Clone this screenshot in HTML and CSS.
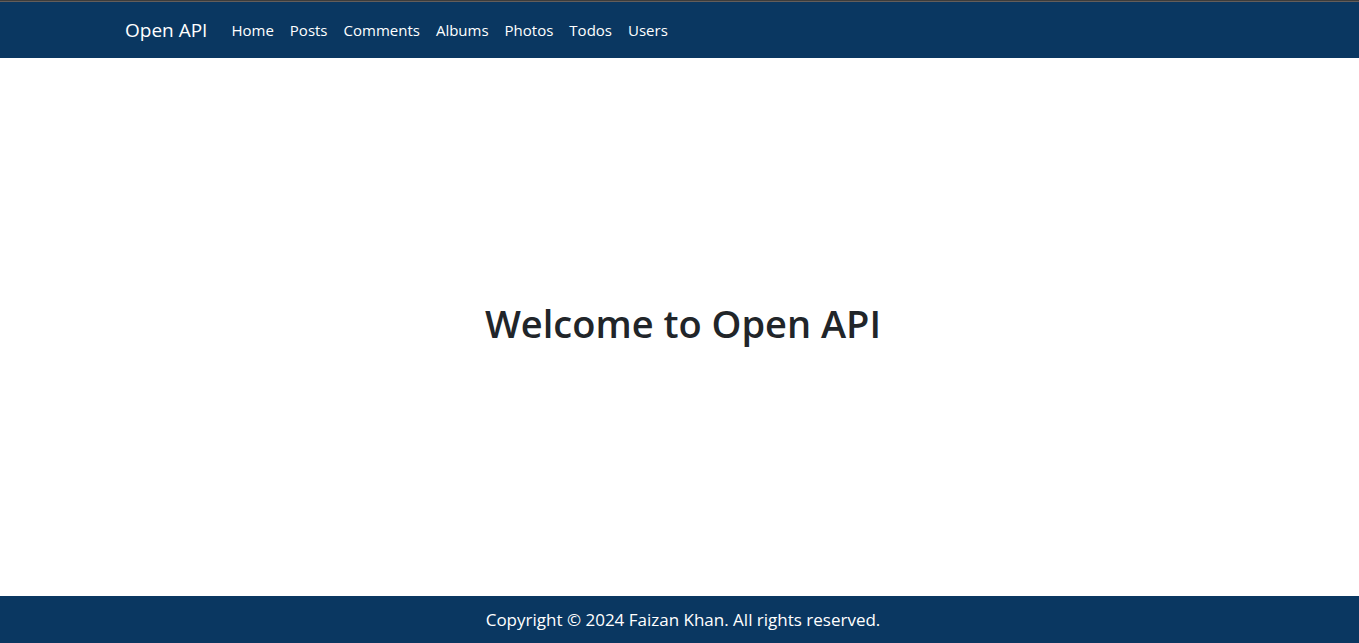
FILE: index.html
```html
<!DOCTYPE html>
<html lang="en">
<head>
<meta charset="utf-8">
<meta name="viewport" content="width=device-width, initial-scale=1">
<title>Open API</title>
<link rel="stylesheet" href="styles.css">
</head>
<body class="page">
<header class="site-header">
  <nav class="navbar" aria-label="Main">
    <a class="brand" href="#">Open API</a>
    <ul class="nav-list">
      <li><a class="nav-link" href="#">Home</a></li>
      <li><a class="nav-link" href="#posts">Posts</a></li>
      <li><a class="nav-link" href="#comments">Comments</a></li>
      <li><a class="nav-link" href="#albums">Albums</a></li>
      <li><a class="nav-link" href="#photos">Photos</a></li>
      <li><a class="nav-link" href="#todos">Todos</a></li>
      <li><a class="nav-link" href="#users">Users</a></li>
    </ul>
  </nav>
</header>
<main class="hero">
  <h1 class="hero-title">Welcome to Open API</h1>
</main>
<footer class="site-footer">
  <p class="copyright">Copyright © 2024 Faizan Khan. All rights reserved.</p>
</footer>
</body>
</html>
```
FILE: styles.css
```css
* { box-sizing: border-box; }

.page {
  margin: 0;
  min-height: 100vh;
  display: flex;
  flex-direction: column;
  font-family: "Segoe UI", "Open Sans", "Noto Sans", sans-serif;
  color: #212529;
  background: #fff;
  border-top: 1px solid #3c3c3c;
}

.site-header {
  background: #0a3761;
  border-top: 1px solid #635d5b;
  padding: 8px 0 8px 7px;
}

.navbar {
  max-width: 1140px;
  margin: 0 auto;
  padding: 0 12px;
  display: flex;
  align-items: center;
}

.brand {
  margin-right: 16px;
  font-size: 19px;
  line-height: 30px;
  color: #fff;
  text-decoration: none;
}

.nav-list {
  display: flex;
  margin: 0;
  padding: 0;
  list-style: none;
}

.nav-link {
  display: block;
  padding: 8px;
  font-size: 15px;
  line-height: 24px;
  color: #fff;
  text-decoration: none;
}

.hero {
  flex: 1;
  display: flex;
  align-items: center;
  justify-content: center;
  padding-left: 7px;
}

.hero-title {
  margin: 0 0 8px;
  font-size: 38px;
  font-weight: 600;
  line-height: 48px;
}

.site-footer {
  background: #0a3761;
  padding: 8px 0 8px 7px;
  color: #fff;
  text-align: center;
}

.copyright {
  margin: 0;
  font-size: 17px;
  line-height: 31px;
}
```
